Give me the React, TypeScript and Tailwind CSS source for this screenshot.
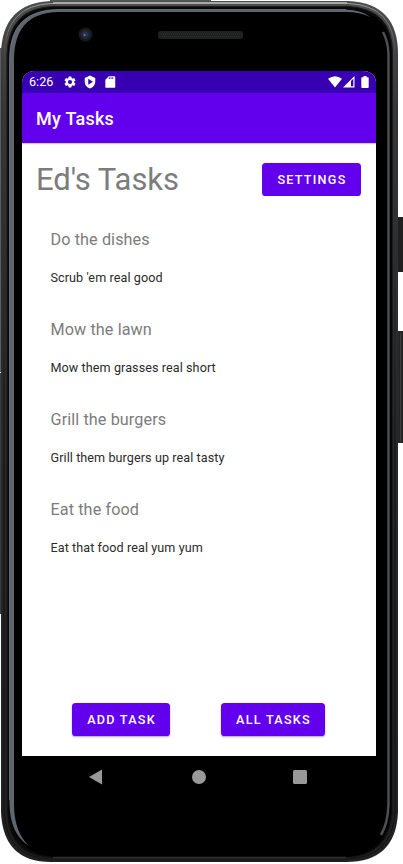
import React from "react";

const tasks = [
  { title: "Do the dishes", body: "Scrub 'em real good" },
  { title: "Mow the lawn", body: "Mow them grasses real short" },
  { title: "Grill the burgers", body: "Grill them burgers up real tasty" },
  { title: "Eat the food", body: "Eat that food real yum yum" },
];

function DeviceBody() {
  return (
    <svg className="absolute inset-0" width="403" height="864" viewBox="0 0 403 864" aria-hidden="true">
      <defs>
        <linearGradient id="edge" x1="0" y1="0" x2="0" y2="1">
          <stop offset="0" stopColor="#4b4d4b" />
          <stop offset="0.12" stopColor="#353535" />
          <stop offset="0.5" stopColor="#292929" />
          <stop offset="1" stopColor="#202020" />
        </linearGradient>
        <linearGradient id="fade" gradientUnits="userSpaceOnUse" x1="0" y1="0" x2="0" y2="864">
          <stop offset="0" stopColor="#a0a4a4" />
          <stop offset="0.06" stopColor="#454545" />
          <stop offset="0.5" stopColor="#111" />
          <stop offset="1" stopColor="#111" />
        </linearGradient>
      </defs>
      <rect x="398" y="217" width="5" height="55" fill="#202020" />
      <rect x="398" y="331" width="5" height="112" fill="#252525" />
      <path d="M400.500 333V442" stroke="#3c3c3c" />
      <rect x="0" y="48" width="2" height="324" fill="#5b5d5b" />
      <rect x="0" y="373" width="2" height="241" fill="#3c3c3c" />
      <path d="M51 1H348Q398 3 398 54V812Q396 862 346 862H51Q3 862 1 812V54Q2 3 51 1Z" fill="url(#edge)" />
      <path d="M51 3.500H348Q395 5 395 54V811Q393 858 346 859H51Q6 858 4 811V54Q6 5 51 3.500Z" fill="none" stroke="url(#fade)" strokeWidth="1" />
      <path d="M53 6.500H347Q392.500 8 392.500 54V811Q390 857 344 858H53Q8 857 7 811V54Q9 8 53 6.500Z" fill="#0a0a0a" stroke="#1a1a1a" />
      <path d="M9 54Q10 10 54 9.500H346Q390 10 391 54V810Q388 856 343 857H54Q12 853 9 810Z" fill="#000" />
      <path d="M29 846Q10 834 9.500 804V58Q10 10 58 9.500H346Q362 10 370 17Q360 12 346 12H58Q14 13 14 60V804Q14 832 29 846Z" fill="#5e656e" />
      <path d="M9.500 800V58Q10 10 58 9.500H346" fill="none" stroke="#7a7e80" strokeWidth="0.700" />
      <path d="M383 32Q388 41 388.500 54V804Q388 823 381 835" fill="none" stroke="#4d4f53" strokeWidth="2.500" />
      <path d="M53 857.500H346" stroke="#303030" strokeWidth="1.500" />
      <path d="M53 3H347" stroke="#a5a9a8" strokeWidth="2" />
      <path d="M50 .5H211" stroke="#555855" />
      <circle cx="85.500" cy="34.500" r="7" fill="#17191a" />
      <circle cx="85.500" cy="34.500" r="4.700" fill="#24272d" />
      <circle cx="85.300" cy="34.500" r="2.800" fill="#24325f" />
      <circle cx="84.500" cy="35" r="1" fill="#6173a0" />
      <rect x="158" y="31" width="85" height="8" rx="3" fill="#202221" />
      <path d="M161 34H240M162 36.500H240" stroke="#303231" strokeWidth="1" strokeDasharray="1 1" />
    </svg>
  );
}

function StatusBar() {
  return (
    <div className="flex h-[21.500px] shrink-0 items-center bg-[#3700b3] pr-[7px] pl-[7px] text-white">
      <span className="text-[12.600px] leading-[21px]">6:26</span>
      <svg className="ml-[9.500px]" width="14" height="14" viewBox="0 0 24 24" fill="currentColor">
        <path d="M19.140 12.940c.04-.3.060-.61.060-.94s-.02-.64-.07-.94l2.030-1.580a.5.500 0 0 0 .12-.61l-1.920-3.320a.5.500 0 0 0-.59-.22l-2.390.96a7 7 0 0 0-1.620-.94l-.36-2.540a.5.500 0 0 0-.48-.41h-3.840a.5.500 0 0 0-.47.41l-.36 2.540a7 7 0 0 0-1.620.94l-2.390-.96a.5.500 0 0 0-.59.220L2.740 8.870a.5.500 0 0 0 .12.610l2.030 1.580a6 6 0 0 0 0 1.880l-2.030 1.580a.5.500 0 0 0-.12.610l1.920 3.320c.12.220.37.290.59.220l2.390-.96c.5.380 1.030.7 1.620.94l.36 2.540c.05.240.24.410.48.410h3.840c.24 0 .44-.17.470-.41l.36-2.540a7 7 0 0 0 1.620-.94l2.390.96c.22.080.47 0 .59-.22l1.920-3.320a.5.500 0 0 0-.12-.61zM12 15.600a3.600 3.600 0 1 1 0-7.200 3.600 3.600 0 0 1 0 7.200z" />
      </svg>
      <svg className="ml-[6px]" width="14" height="14" viewBox="0 0 24 24" fill="currentColor">
        <path fillRule="evenodd" d="M12 1 3 5v6c0 5.550 3.840 10.740 9 12 5.160-1.260 9-6.450 9-12V5zM9 6.500v10l8-5z" />
      </svg>
      <svg className="ml-[6px]" width="14" height="14" viewBox="0 0 24 24" fill="currentColor">
        <path fillRule="evenodd" d="M19 2h-9L4 8v12a2 2 0 0 0 2 2h13a2 2 0 0 0 2-2V4a2 2 0 0 0-2-2zM10 4h1.500v3h-1.500zm3 0h1.500v3h-1.500zm3 0h1.500v3h-1.500z" />
      </svg>
      <svg className="ml-auto" width="14" height="12" viewBox="0 0 14 12" fill="currentColor">
        <path d="M0 2.800Q7-2.500 14 2.800L7 11.500Z" />
      </svg>
      <svg className="ml-px" width="12" height="12" viewBox="0 0 12 12">
        <path d="M0 11.500 11.500 0V11.500Z" fill="#fff" />
        <path d="M8 5 10.300 2.700V10.300H8Z" fill="#3700b3" />
      </svg>
      <svg className="ml-[6px]" width="8" height="12" viewBox="0 0 8 12" fill="currentColor">
        <path d="M2.500 0h3v1.200h1.300q.9 0 .9.900v8.900q0 .9-.9.900H1.200q-.9 0-.9-.9V2.100q0-.9.900-.9h1.300Z" />
      </svg>
    </div>
  );
}

function Button({ label, className }: { label: string; className: string }) {
  return (
    <button
      className={
        "h-[32.500px] shrink-0 rounded-[3.600px] bg-[#6200ee] pl-px text-center text-[12.600px] font-medium tracking-[1.260px] text-white " +
        className
      }
    >
      {label}
    </button>
  );
}

export default function App() {
  return (
    <div className="relative h-[864px] w-[403px] overflow-hidden bg-white font-[Roboto,sans-serif]">
      <DeviceBody />
      <div className="relative flex h-full w-full flex-col pt-[71px] pl-[22px]">
        <div className="flex h-[684.500px] w-[354px] flex-col overflow-hidden rounded-t-[12px] bg-white">
          <StatusBar />
          <header className="flex h-[50px] shrink-0 items-center bg-[#6200ee] pt-[2px] pl-[14px] text-[18px] font-medium tracking-[0.260px] text-white shadow-[0_1px_1px_rgba(0,0,0,0.2)]">
            My Tasks
          </header>
          <main className="flex flex-1 flex-col">
            <div className="flex h-[74px] shrink-0 items-center justify-between pr-[15px] pl-[14px]">
              <h1 className="text-[31px] leading-[36px] font-normal tracking-[-0.050px] text-[#7c7c7c]">Ed's Tasks</h1>
              <Button label="SETTINGS" className="w-[99px] pt-px" />
            </div>
            <ul className="flex flex-col pt-[11px] pl-[28.500px]">
              {tasks.map((task) => (
                <li key={task.title} className="flex h-[90.200px] flex-col">
                  <h2 className="text-[16.200px] leading-[24px] font-normal tracking-[0.100px] text-[#7c7c7c]">{task.title}</h2>
                  <p className="mt-[17px] text-[12.600px] leading-[18px] tracking-[0.080px] text-[#2b2b2b]">{task.body}</p>
                </li>
              ))}
            </ul>
            <div className="mt-auto flex gap-[51px] pb-[20px] pl-[50px]">
              <Button label="ADD TASK" className="w-[98px] pt-[2px] shadow-[0_1px_2px_rgba(0,0,0,0.35)]" />
              <Button label="ALL TASKS" className="w-[104px] pt-[2px] shadow-[0_1px_2px_rgba(0,0,0,0.35)]" />
            </div>
          </main>
        </div>
        <nav className="flex h-[43px] w-[354px] items-center bg-black pl-[67px] text-[#999]">
          <svg width="14" height="16" viewBox="0 0 14 16" fill="currentColor">
            <path d="M0 8 13 .5V15.500Z" />
          </svg>
          <span className="ml-[89px] size-[14px] rounded-full bg-[#999]" />
          <span className="ml-[87px] size-[14px] rounded-[1.500px] bg-[#999]" />
        </nav>
      </div>
    </div>
  );
}
